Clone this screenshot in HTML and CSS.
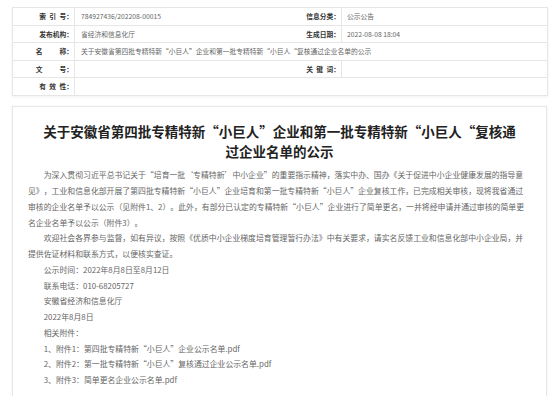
FILE: index.html
```html
<!DOCTYPE html>
<html lang="zh-CN">

<head>
    <meta charset="UTF-8">
    <meta name="viewport" content="width=device-width, initial-scale=1.0">
    <title>关于安徽省第四批专精特新“小巨人”企业和第一批专精特新“小巨人“复核通过企业名单的公示</title>
    <link rel="stylesheet" href="styles.css">
</head>

<body>
    <div class="container">
        <table class="info-table">
            <colgroup>
                <col class="col-label">
                <col class="col-value">
                <col class="col-label-right">
                <col class="col-value-right">
            </colgroup>
            <tr>
                <th>索&ensp;引&ensp;号：</th>
                <td>784927436/202208-00015</td>
                <th class="label-right">信息分类：</th>
                <td class="value-right">公示公告</td>
            </tr>
            <tr>
                <th>发布机构：</th>
                <td>省经济和信息化厅</td>
                <th class="label-right">生成日期：</th>
                <td class="value-right">2022-08-08 18:04</td>
            </tr>
            <tr>
                <th>名&emsp;&emsp;&ensp;称：</th>
                <td colspan="3">关于安徽省第四批专精特新“小巨人”企业和第一批专精特新“小巨人“复核通过企业名单的公示</td>
            </tr>
            <tr>
                <th>文&emsp;&emsp;&ensp;号：</th>
                <td></td>
                <th class="label-right">关&ensp;键&ensp;词：</th>
                <td class="value-right"></td>
            </tr>
            <tr>
                <th>有&ensp;效&ensp;性：</th>
                <td colspan="3"></td>
            </tr>
        </table>

        <div class="article">
            <h1 class="article-title">关于安徽省第四批专精特新“小巨人”企业和第一批专精特新“小巨人“复核通过企业名单的公示</h1>
            <div class="article-body">
                <p>为深入贯彻习近平总书记关于“培育一批‘专精特新’中小企业”的重要指示精神，落实中办、国办《关于促进中小企业健康发展的指导意见》，工业和信息化部开展了第四批专精特新“小巨人”企业培育和第一批专精特新“小巨人”企业复核工作，已完成相关审核，现将我省通过审核的企业名单予以公示（见附件1、2）。此外，有部分已认定的专精特新“小巨人”企业进行了简单更名，一并将经申请并通过审核的简单更名企业名单予以公示（附件3）。</p>
                <p>欢迎社会各界参与监督，如有异议，按照《优质中小企业梯度培育管理暂行办法》中有关要求，请实名反馈工业和信息化部中小企业局，并提供佐证材料和联系方式，以便核实查证。</p>
                <p>公示时间：2022年8月8日至8月12日</p>
                <p>联系电话：010-68205727</p>
                <p>安徽省经济和信息化厅</p>
                <p>2022年8月8日</p>
                <p>相关附件：</p>
                <p>1、附件1：第四批专精特新“小巨人”企业公示名单.pdf</p>
                <p>2、附件2：第一批专精特新“小巨人”复核通过企业公示名单.pdf</p>
                <p>3、附件3：简单更名企业公示名单.pdf</p>
            </div>
        </div>
    </div>
</body>

</html>
```

FILE: styles.css
```css
* {
    box-sizing: border-box;
    margin: 0;
    padding: 0;
}

body {
    background-color: #fff;
    color: #333;
    font-family: "Noto Sans CJK SC", sans-serif;
    text-spacing-trim: space-all;
}

.container {
    width: 535px;
    margin: 7px 0 0 12px;
}

/* info table */
.info-table {
    width: 100%;
    table-layout: fixed;
    border-collapse: collapse;
    border: 1px solid #e6e6e6;
    box-shadow: 0 1px 3px rgba(0, 0, 0, 0.06);
    font-size: 6.75px;
    line-height: 1;
}

.col-label {
    width: 62px;
}

.col-value {
    width: 197px;
}

.col-label-right {
    width: 70px;
}

.col-value-right {
    width: 206px;
}

.info-table tr {
    height: 17.6px;
}

.info-table th,
.info-table td {
    border-bottom: 1px solid #e6e6e6;
    white-space: nowrap;
    overflow: hidden;
}

.info-table th {
    text-align: right;
    font-weight: bold;
    color: #333;
    padding-right: 1px;
    border-right: 1px solid #e6e6e6;
}

.info-table td {
    text-align: left;
    color: #666;
    padding-left: 6px;
}

.info-table td.value-right {
    padding-left: 5px;
}

/* article */
.article {
    margin-top: 10px;
    min-height: 300px;
    padding: 14px 0 20px;
    border: 1px solid #e6e6e6;
    box-shadow: 0 1px 3px rgba(0, 0, 0, 0.06);
}

.article-title {
    padding: 0 27px;
    font-size: 13.5px;
    line-height: 20.25px;
    font-weight: bold;
    color: #222;
    text-align: center;
}

.article-body {
    margin-top: 6px;
    padding: 0 21.5px 0 15px;
    font-size: 7.875px;
    line-height: 15.75px;
    color: #666;
}

.article-body p {
    text-indent: 2em;
}
```
